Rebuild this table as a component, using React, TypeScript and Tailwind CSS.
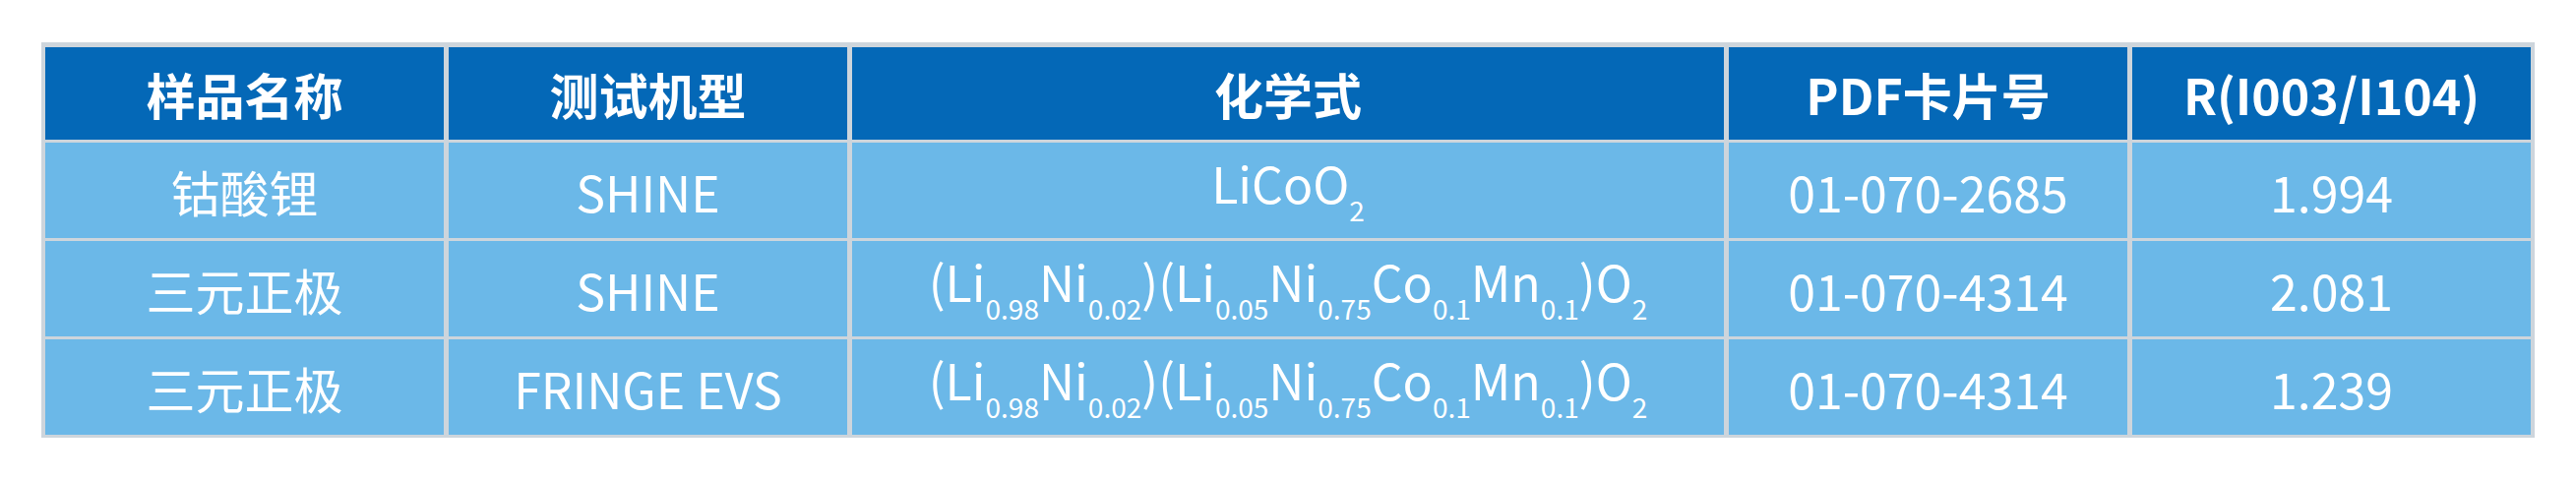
import React from 'react';

type Part = readonly [string, string?];

const HEADERS = ['样品名称', '测试机型', '化学式', 'PDF卡片号', 'R(I003/I104)'];

const NCM: Part[] = [
  ['(Li', '0.98'],
  ['Ni', '0.02'],
  [')(Li', '0.05'],
  ['Ni', '0.75'],
  ['Co', '0.1'],
  ['Mn', '0.1'],
  [')O', '2'],
];

const ROWS: { name: string; model: string; formula: Part[]; pdf: string; r: string }[] = [
  { name: '钴酸锂', model: 'SHINE', formula: [['LiCoO', '2']], pdf: '01-070-2685', r: '1.994' },
  { name: '三元正极', model: 'SHINE', formula: NCM, pdf: '01-070-4314', r: '2.081' },
  { name: '三元正极', model: 'FRINGE EVS', formula: NCM, pdf: '01-070-4314', r: '1.239' },
];

function Formula({ parts }: { readonly parts: Part[] }) {
  return (
    <span>
      {parts.map(([main, sub], i) => (
        <React.Fragment key={i}>
          {main}
          {sub && <span className="align-[-18px] text-[28px] leading-none">{sub}</span>}
        </React.Fragment>
      ))}
    </span>
  );
}

function Cell({ children, head }: { readonly children: React.ReactNode; readonly head?: boolean }) {
  return (
    <div
      className={
        head
          ? 'flex h-[94px] items-center justify-center bg-[#0468b7] text-[50px] font-bold'
          : 'flex h-[97px] items-center justify-center bg-[#6bb8e8] text-[50px] font-normal'
      }
    >
      {children}
    </div>
  );
}

export default function App() {
  return (
    <div className="h-[488px] w-[2618px] bg-white pl-[42px] pt-[43px] font-['Noto_Sans_CJK_SC',sans-serif] text-white">
      <div className="grid w-[2534px] grid-cols-[405px_405px_886px_405px_405px] gap-x-[5px] gap-y-[3px] bg-[#cdd5dc] px-[4px] pb-[3px] pt-[5px] leading-none">
        {HEADERS.map((h) => (
          <Cell key={h} head>
            {h}
          </Cell>
        ))}
        {ROWS.map((row, i) => (
          <React.Fragment key={i}>
            <Cell>{row.name}</Cell>
            <Cell>{row.model}</Cell>
            <Cell>
              <Formula parts={row.formula} />
            </Cell>
            <Cell>{row.pdf}</Cell>
            <Cell>{row.r}</Cell>
          </React.Fragment>
        ))}
      </div>
    </div>
  );
}
